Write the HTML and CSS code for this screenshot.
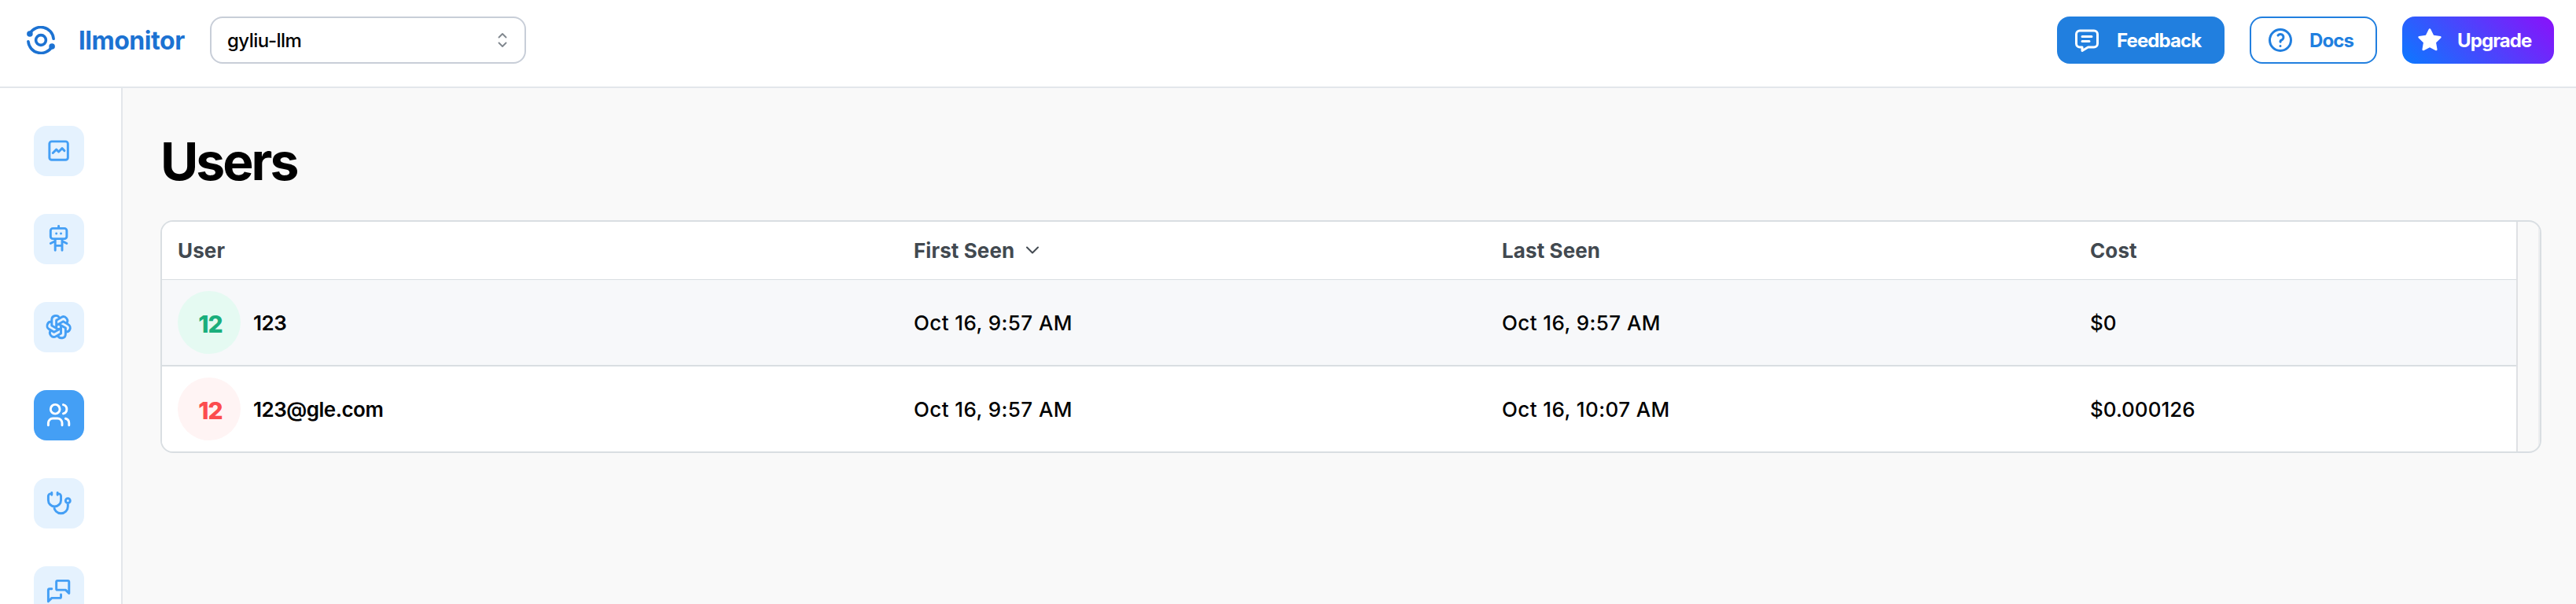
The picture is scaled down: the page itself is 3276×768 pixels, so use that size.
FILE: index.html
```html
<!DOCTYPE html>
<html lang="en">
<head>
<meta charset="utf-8">
<title>Users - llmonitor</title>
<link rel="stylesheet" href="styles.css">
</head>
<body>
<header class="header">
  <div class="brand">
    <svg class="logo" viewBox="0 0 36 36" fill="none" stroke="currentColor" stroke-width="3.6">
      <circle cx="18" cy="18" r="6.400"/>
      <path d="M4 9.500A16.200 16.200 0 0 1 34.100 16.300M32 26.500A16.200 16.200 0 0 1 1.900 19.700" stroke-linecap="round"/>
      <circle cx="3.900" cy="10" r="2"/><circle cx="32.100" cy="26" r="2"/>
    </svg>
    <span class="brand-name">llmonitor</span>
  </div>
  <div class="select">
    <span class="select-value">gyliu-llm</span>
    <svg class="select-icon" viewBox="0 0 12 18" fill="none" stroke="currentColor" stroke-width="1.8" stroke-linecap="round" stroke-linejoin="round"><path d="M1.500 5.500 6 1l4.500 4.500M1.500 12.500 6 17l4.500-4.500"/></svg>
  </div>
  <div class="actions">
    <button class="btn btn-feedback">
      <svg class="btn-icon" viewBox="0 0 24 24"><path d="M8 9h8M8 13h6M18 4a3 3 0 0 1 3 3v8a3 3 0 0 1-3 3h-5l-5 3v-3H6a3 3 0 0 1-3-3V7a3 3 0 0 1 3-3z"/></svg>
      <span>Feedback</span>
    </button>
    <button class="btn btn-docs">
      <svg class="btn-icon" viewBox="0 0 24 24"><path d="M3 12a9 9 0 1 0 18 0a9 9 0 1 0-18 0M12 17v.01M12 13.500a1.500 1.500 0 0 1 1-1.500a2.600 2.600 0 1 0-3-4"/></svg>
      <span>Docs</span>
    </button>
    <button class="btn btn-upgrade">
      <svg class="btn-icon star" viewBox="0 0 24 24"><path d="m8.243 7.340-6.380.925-.113.023a1 1 0 0 0-.44 1.684l4.622 4.499-1.090 6.355-.013.110a1 1 0 0 0 1.464.944l5.706-3 5.693 3 .100.046a1 1 0 0 0 1.352-1.100l-1.091-6.355 4.624-4.500.078-.085a1 1 0 0 0-.633-1.620l-6.380-.926-2.852-5.780a1 1 0 0 0-1.794 0z"/></svg>
      <span>Upgrade</span>
    </button>
  </div>
</header>
<div class="shell">
  <nav class="sidebar">
    <a class="nav-item"><svg viewBox="0 0 24 24"><path d="M4 6a2 2 0 0 1 2-2h12a2 2 0 0 1 2 2v12a2 2 0 0 1-2 2H6a2 2 0 0 1-2-2zM7 14l3-3 2 2 3-3 2 2"/></svg></a>
    <a class="nav-item"><svg viewBox="0 0 24 24"><path d="M7 3h10a2 2 0 0 1 2 2v5a2 2 0 0 1-2 2H7a2 2 0 0 1-2-2V5a2 2 0 0 1 2-2zM9 12v10M15 12v10M9 18h6M5 16l4-2M15 14l4 2M12 1v2M10 7.500v.01M14 7.500v.01"/></svg></a>
    <a class="nav-item"><svg viewBox="0 0 24 24"><path d="M11.217 19.384a3.501 3.501 0 0 0 6.783-1.217v-5.167l-6-3.350M5.214 15.014a3.501 3.501 0 0 0 4.446 5.266l4.340-2.534v-6.946M6 7.630c-1.391-.236-2.787.395-3.534 1.689a3.474 3.474 0 0 0 1.271 4.745l4.263 2.514 6-3.348M12.783 4.616a3.501 3.501 0 0 0-6.783 1.217v5.067l6 3.450M18.786 8.986a3.501 3.501 0 0 0-4.446-5.266l-4.340 2.534v6.946M18 16.302c1.391.236 2.787-.395 3.534-1.689a3.474 3.474 0 0 0-1.271-4.745l-4.308-2.514-5.955 3.420"/></svg></a>
    <a class="nav-item active"><svg viewBox="0 0 24 24"><path d="M5 7a4 4 0 1 0 8 0a4 4 0 1 0-8 0M3 21v-2a4 4 0 0 1 4-4h4a4 4 0 0 1 4 4v2M16 3.130a4 4 0 0 1 0 7.750M21 21v-2a4 4 0 0 0-3-3.850"/></svg></a>
    <a class="nav-item"><svg viewBox="0 0 24 24"><path d="M6 4H5a2 2 0 0 0-2 2v3.500a5.500 5.500 0 0 0 11 0V6a2 2 0 0 0-2-2h-1M8 15a6 6 0 1 0 12 0v-3M11 3v2M6 3v2M18 10a2 2 0 1 0 4 0a2 2 0 1 0-4 0"/></svg></a>
    <a class="nav-item"><svg viewBox="0 0 24 24"><path d="m21 14-3-3h-7a1 1 0 0 1-1-1V4a1 1 0 0 1 1-1h9a1 1 0 0 1 1 1zM14 15v2a1 1 0 0 1-1 1H6l-3 3V11a1 1 0 0 1 1-1h2"/></svg></a>
  </nav>
  <main class="main">
    <h1 class="title">Users</h1>
    <div class="table">
      <div class="grid">
        <div class="row head">
          <div class="cell">User</div>
          <div class="cell">First Seen<svg class="sort" viewBox="0 0 18 11" fill="none" stroke="currentColor" stroke-width="2" stroke-linecap="round" stroke-linejoin="round"><path d="m2 1.500 7 7 7-7"/></svg></div>
          <div class="cell">Last Seen</div>
          <div class="cell">Cost</div>
        </div>
        <div class="row shaded">
          <div class="cell"><span class="avatar green">12</span><span class="name">123</span></div>
          <div class="cell date">Oct 16, 9:57 AM</div>
          <div class="cell date">Oct 16, 9:57 AM</div>
          <div class="cell cost">$0</div>
        </div>
        <div class="row">
          <div class="cell"><span class="avatar red">12</span><span class="name">123@gle.com</span></div>
          <div class="cell date">Oct 16, 9:57 AM</div>
          <div class="cell date">Oct 16, 10:07 AM</div>
          <div class="cell cost">$0.000126</div>
        </div>
      </div>
      <div class="gutter"></div>
    </div>
  </main>
</div>
</body>
</html>
```
FILE: styles.css
```css
* { box-sizing: border-box; }
body {
  margin: 0;
  height: 768px;
  overflow: hidden;
  background: #f9f9f9;
  color: #000;
  font-family: Inter, "Liberation Sans", sans-serif;
  font-size: 26px;
}
svg { display: block; flex: none; }
.header {
  height: 112px;
  padding: 21px 28px 29px 34px;
  display: flex;
  align-items: flex-start;
  background: #fff;
  border-bottom: 2px solid #e3e7eb;
}
.brand {
  width: 233px;
  height: 60px;
  display: flex;
  align-items: center;
  gap: 30px;
  color: #1c72d2;
}
.logo { width: 36px; height: 36px; }
.brand-name { font-size: 32px; font-weight: 700; letter-spacing: -0.45px; }
.select {
  width: 402px;
  height: 60px;
  padding: 0 22px 0 20px;
  display: flex;
  align-items: center;
  justify-content: space-between;
  border: 2px solid #c8ced8;
  border-radius: 16px;
  font-size: 24px;
  font-weight: 500;
}
.select-value { letter-spacing: -0.5px; }
.select-icon { width: 12px; height: 18px; color: #7f868d; }
.actions { margin-left: auto; display: flex; gap: 32px; }
.btn {
  height: 60px;
  padding: 0;
  display: flex;
  align-items: center;
  border: 0;
  border-radius: 16px;
  font: 700 24px Inter, "Liberation Sans", sans-serif;
  letter-spacing: -0.9px;
  color: #fff;
}
.btn-icon, .nav-item svg {
  fill: none;
  stroke: currentColor;
  stroke-width: 2;
  stroke-linecap: round;
  stroke-linejoin: round;
}
.btn-icon { width: 36px; height: 36px; }
.btn-feedback { width: 213px; padding-left: 20px; gap: 20px; background: #217fdf; }
.btn-docs { width: 162px; padding-left: 19px; gap: 19px; border: 2px solid #217fdf; background: #fff; color: #217fdf; }
.btn-upgrade { width: 193px; padding-left: 19px; gap: 19px; background: linear-gradient(45deg, #0b79ff, #8b10fa); }
.btn-icon.star { width: 32px; height: 32px; fill: currentColor; stroke: none; }
.shell { display: flex; height: 656px; }
.sidebar {
  width: 156px;
  padding: 48px 0 0 43px;
  display: flex;
  flex-direction: column;
  gap: 48px;
  background: #fff;
  border-right: 2px solid #e3e7eb;
}
.nav-item {
  width: 64px;
  height: 64px;
  flex: none;
  display: flex;
  align-items: center;
  justify-content: center;
  border-radius: 16px;
  background: #e5f2fe;
  color: #449ff5;
}
.nav-item svg { width: 35.2px; height: 35.2px; }
.nav-item.active { background: #449ff5; color: #fff; }
.main { flex: 1; padding: 48px 44px 0 48px; }
.title {
  margin: 0 0 32px;
  height: 88px;
  line-height: 91px;
  font-size: 66px;
  font-weight: 700;
  letter-spacing: -3px;
}
.table {
  height: 296px;
  display: flex;
  overflow: hidden;
  border: 2px solid #d9dee2;
  border-radius: 16px;
}
.grid { width: 2996px; background: #fff; border-right: 2px solid #dfe1e4; }
.row { display: grid; grid-template-columns: 936px 748px 748px 562px; height: 108px; }
.row.head { height: 74px; border-bottom: 1px solid #d9dee2; color: #424950; font-weight: 700; }
.row.shaded { height: 110px; background: #f7f8fa; border-bottom: 2px solid #d9dee2; }
.cell { display: flex; align-items: center; padding-left: 20px; letter-spacing: -0.5px; }
.head .cell { letter-spacing: 0.1px; }
.cell.date { font-weight: 450; letter-spacing: 0.4px; }
.cell.cost { font-weight: 450; letter-spacing: 0; }
.sort { width: 18px; height: 11px; margin-left: 14px; }
.avatar {
  width: 80px;
  height: 80px;
  margin-right: 16px;
  padding: 4px 0 0 3px;
  display: flex;
  align-items: center;
  justify-content: center;
  border-radius: 50%;
  font-size: 30px;
  font-weight: 800;
  letter-spacing: -1px;
}
.avatar.green { background: #e5faf2; color: #1aae7c; }
.avatar.red { background: #fff4f4; color: #fc4c4e; }
.name { font-weight: 600; }
.gutter { flex: 1; border-right: 2px solid #eceef0; }
```
